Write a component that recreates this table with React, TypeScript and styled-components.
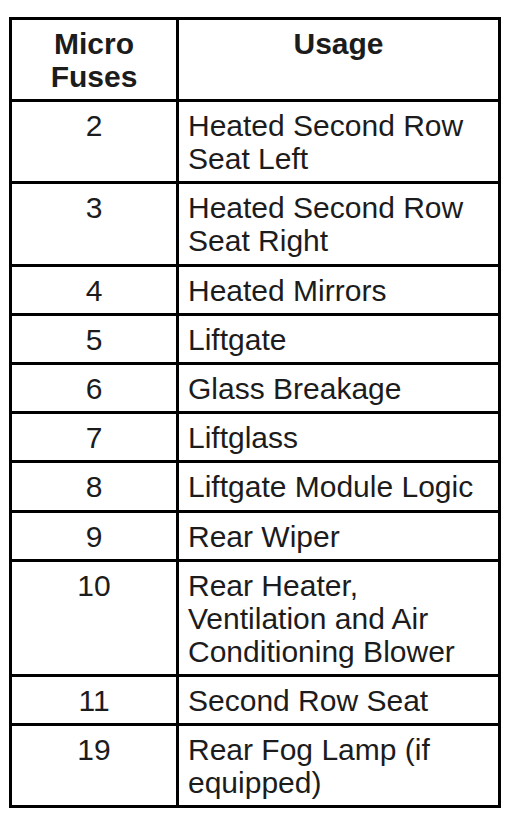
import React from "react";
import styled, {createGlobalStyle} from "styled-components";

const GlobalStyle = createGlobalStyle`
    html, body {
        margin: 0;
        padding: 0;
        background: #ffffff;
    }
`;

const Page = styled.div`
    padding: 17px 0 0 9px;
    font-family: "Liberation Sans", Arial, sans-serif;
    color: #1c1c1c;
`;

const Table = styled.table`
    border-collapse: separate;
    border-spacing: 0;
    border-top: 3px solid #000;
    border-left: 3px solid #000;
    width: 492px;
    table-layout: fixed;
`;

const HeadCell = styled.th<{ $w: number }>`
    box-sizing: border-box;
    width: ${p => p.$w}px;
    border-right: 3px solid #000;
    border-bottom: 3px solid #000;
    padding: 7px 9px 6.2px;
    font-size: 30px;
    line-height: 33px;
    font-weight: bold;
    text-align: center;
    vertical-align: top;
`;

const Cell = styled.td<{ $center?: boolean }>`
    box-sizing: border-box;
    border-right: 3px solid #000;
    border-bottom: 3px solid #000;
    padding: 7px 9px 6.2px;
    font-size: 30px;
    line-height: 33px;
    text-align: ${p => p.$center ? "center" : "left"};
    vertical-align: top;
`;

const fuses: [string, string][] = [
  ["2", "Heated Second Row Seat Left"],
  ["3", "Heated Second Row Seat Right"],
  ["4", "Heated Mirrors"],
  ["5", "Liftgate"],
  ["6", "Glass Breakage"],
  ["7", "Liftglass"],
  ["8", "Liftgate Module Logic"],
  ["9", "Rear Wiper"],
  ["10", "Rear Heater, Ventilation and Air Conditioning Blower"],
  ["11", "Second Row Seat"],
  ["19", "Rear Fog Lamp (if equipped)"],
];

const App = () => (
  <>
    <GlobalStyle/>
    <Page>
      <Table>
        <thead>
          <tr>
            <HeadCell $w={167}>Micro<br/>Fuses</HeadCell>
            <HeadCell $w={322}>Usage</HeadCell>
          </tr>
        </thead>
        <tbody>
          {
            fuses.map(([num, usage]) => (
              <tr key={num}>
                <Cell $center>{num}</Cell>
                <Cell>{usage}</Cell>
              </tr>
            ))
          }
        </tbody>
      </Table>
    </Page>
  </>
);

export default App;
